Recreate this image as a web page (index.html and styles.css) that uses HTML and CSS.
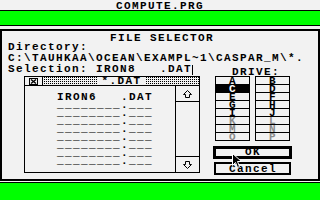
FILE: index.html
```html
<!DOCTYPE html>
<html>
<head>
<meta charset="utf-8">
<link rel="stylesheet" href="styles.css">
</head>
<body>
<div class="screen">
  <div class="apptitle">COMPUTE.PRG</div>
  <div class="greenbar"></div>
  <div class="dialog">
    <div class="dtitle">FILE SELECTOR</div>
    <div class="line dirlabel">Directory:</div>
    <div class="line path">C:\TAUHKAA\OCEAN\EXAMPL~1\CASPAR_M\*.</div>
    <div class="main">
      <div class="leftcol">
        <div class="line sel">Selection: IRON8   .DAT<span class="caret"></span></div>
        <div class="listbox">
          <div class="listtitle">
            <div class="closebox">
              <svg width="9" height="7" viewBox="0 0 9 7"><rect x="0.5" y="0.5" width="8" height="6" fill="none" stroke="#000"/><path d="M2 1.5 L7 5.5 M7 1.5 L2 5.5" stroke="#000" stroke-width="1.4"/></svg>
            </div>
            <div class="mask"><span class="masktext">*.DAT</span></div>
          </div>
          <div class="listbody">
            <div class="files">
              <div class="file">IRON6   .DAT</div>
              <div class="empties">
                <div class="file">________.___</div>
                <div class="file">________.___</div>
                <div class="file">________.___</div>
                <div class="file">________.___</div>
                <div class="file">________.___</div>
                <div class="file">________.___</div>
                <div class="file">________.___</div>
                <div class="file">________.___</div>
              </div>
            </div>
            <div class="scroll">
              <div class="arrow">
                <svg width="9" height="8" viewBox="0 0 9 8"><path d="M4.5 0.5 L8.5 4.5 L6.5 4.5 L6.5 7.5 L2.5 7.5 L2.5 4.5 L0.5 4.5 Z" fill="none" stroke="#000"/></svg>
              </div>
              <div class="track"></div>
              <div class="arrow down">
                <svg width="9" height="8" viewBox="0 0 9 8"><path d="M4.5 7.5 L8.5 3.5 L6.5 3.5 L6.5 0.5 L2.5 0.5 L2.5 3.5 L0.5 3.5 Z" fill="none" stroke="#000"/></svg>
              </div>
            </div>
          </div>
        </div>
      </div>
      <div class="rightcol">
        <div class="drivelabel">DRIVE:</div>
        <div class="drives">
          <div class="drivecol">
            <div class="cell">A</div>
            <div class="cell on">C</div>
            <div class="cell">E</div>
            <div class="cell">G</div>
            <div class="cell">I</div>
            <div class="cell off">K</div>
            <div class="cell off">M</div>
            <div class="cell off">O</div>
          </div>
          <div class="drivecol">
            <div class="cell">B</div>
            <div class="cell">D</div>
            <div class="cell">F</div>
            <div class="cell">H</div>
            <div class="cell">J</div>
            <div class="cell off">L</div>
            <div class="cell off">N</div>
            <div class="cell off">P</div>
          </div>
        </div>
        <div class="btn ok">OK</div>
        <div class="btn cancel">Cancel</div>
      </div>
    </div>
  </div>
  <div class="greenbar bottom"></div>
  <svg class="pointer" width="11" height="16" viewBox="0 0 11 16"><path d="M0.5 0.5 L0.5 12.5 L3.5 9.5 L5.5 14.5 L7.5 13.5 L5.5 8.5 L9.5 8.5 Z" fill="#000" stroke="#fff" stroke-width="1"/></svg>
</div>
</body>
</html>
```

FILE: styles.css
```css
* { box-sizing: border-box; }
html, body { margin: 0; padding: 0; }
body {
  width: 320px;
  height: 200px;
  overflow: hidden;
  background: #f2f2f2;
}
.screen {
  position: relative;
  width: 320px;
  height: 200px;
  overflow: hidden;
  background: #f2f2f2;
  color: #000;
  font-family: "Liberation Mono", "DejaVu Sans Mono", monospace;
  font-weight: 700;
  font-size: 11px;
  letter-spacing: 1.4px;
  line-height: 8px;
}
.apptitle {
  height: 10px;
  padding-top: 2px;
  text-align: center;
}
.greenbar {
  height: 16px;
  background: #00ff00;
  border-top: 1px solid #000;
  border-bottom: 1px solid #000;
}
.greenbar.bottom {
  margin-top: 1px;
  height: 24px;
  border-bottom: none;
}
.dialog {
  margin-top: 3px;
  height: 152px;
  border: 2px solid #000;
}
.dtitle {
  margin-top: 3px;
  height: 8px;
  padding-left: 4px;
  text-align: center;
}
.line {
  height: 8px;
  white-space: pre;
}
.dirlabel { margin-top: 1px; padding-left: 6px; }
.path { margin-top: 3px; padding-left: 6px; }
.main {
  display: flex;
}
.leftcol {
  width: 198px;
  padding-left: 6px;
}
.sel { margin-top: 3px; }
.caret {
  display: inline-block;
  width: 1px;
  height: 10px;
  margin-bottom: -2px;
  background: #000;
  vertical-align: top;
}
.listbox {
  margin-top: 3px;
  margin-left: 16px;
  width: 176px;
  height: 97px;
  border: 1px solid #000;
  display: flex;
  flex-direction: column;
}
.listtitle {
  height: 9px;
  border-bottom: 1px solid #000;
  display: flex;
}
.closebox {
  width: 18px;
  border-right: 1px solid #000;
  display: flex;
  align-items: center;
  justify-content: center;
}
.mask {
  flex: 1;
  display: flex;
  justify-content: center;
  background-image: repeating-conic-gradient(#000 0 25%, transparent 0 100%);
  background-size: 2px 2px;
}
.masktext {
  background: #f2f2f2;
  padding: 0 3px 0 4px;
  white-space: pre;
}
.listbody {
  flex: 1;
  display: flex;
}
.files {
  flex: 1;
  padding-left: 32px;
  padding-top: 7px;
}
.file { height: 8px; white-space: pre; }
.scroll {
  width: 24px;
  border-left: 1px solid #000;
  display: flex;
  flex-direction: column;
}
.arrow {
  height: 16px;
  border-bottom: 1px solid #000;
  display: flex;
  align-items: center;
  justify-content: center;
}
.arrow.down {
  border-bottom: none;
  border-top: 1px solid #000;
}
.track { flex: 1; }
.rightcol {
  margin-left: 13px;
  width: 79px;
  display: flex;
  flex-direction: column;
}
.drivelabel {
  margin-top: 6px;
  height: 8px;
  padding-left: 19px;
}
.drives {
  margin-left: 2px;
  display: flex;
  gap: 5px;
}
.drivecol {
  width: 35px;
  border: 1px solid #000;
  border-bottom: none;
}
.cell {
  height: 8px;
  border-bottom: 1px solid #000;
  text-align: center;
  padding-left: 1px;
}
.cell.on {
  background: #000;
  color: #fff;
}
.cell.off { color: #8a8a8a; }
.btn {
  height: 13px;
  text-align: center;
  background: #f2f2f2;
}
.ok {
  margin-top: 5px;
  width: 79px;
  border: 3px solid #000;
  line-height: 7px;
  padding-left: 1px;
}
.cancel {
  margin-top: 3px;
  margin-left: 1px;
  width: 77px;
  border: 2px solid #000;
  padding-top: 1px;
  padding-left: 1px;
}
.pointer {
  position: absolute;
  left: 232px;
  top: 153px;
}
```
